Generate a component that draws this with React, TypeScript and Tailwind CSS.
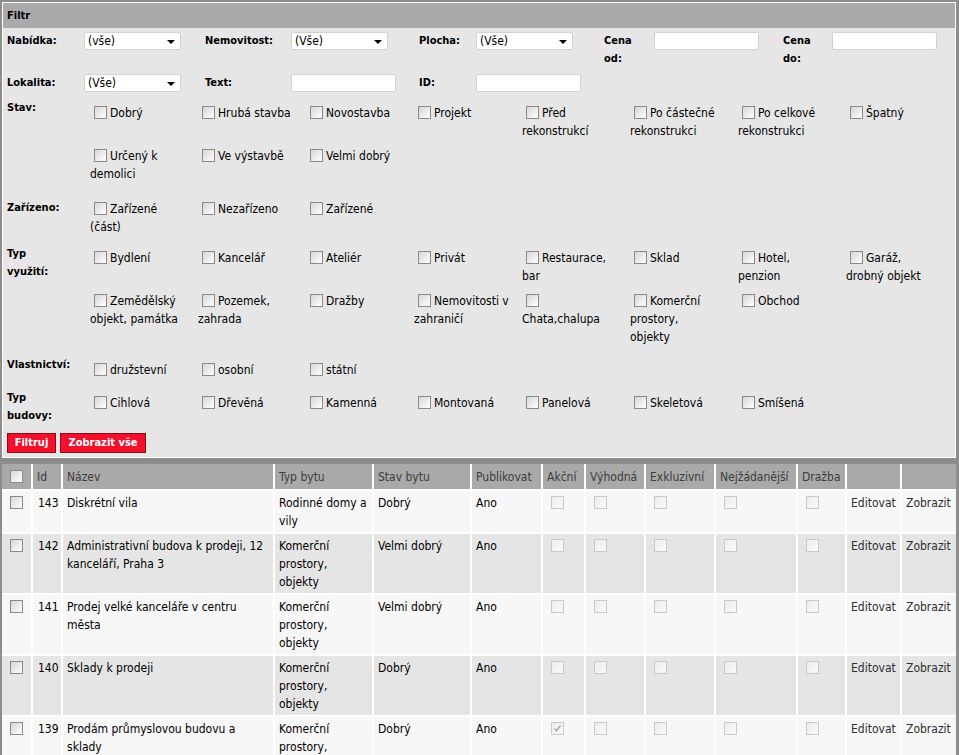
import type { ReactNode } from 'react'

// Filter panel + listing table of an old-school real-estate admin page
const FONT = "font-['DejaVu_Sans_Condensed','DejaVu_Sans',Verdana,sans-serif]"

type CheckItem = string[]

interface Section {
  label: string[]
  pt: string
  pb: string
  rows: CheckItem[][]
}

const SECTIONS: Section[] = [
  {
    label: ['Stav:'],
    pt: 'pt-[10px]',
    pb: 'pb-[11px]',
    rows: [
      [['Dobrý'], ['Hrubá stavba'], ['Novostavba'], ['Projekt'], ['Před', 'rekonstrukcí'], ['Po částečné', 'rekonstrukci'], ['Po celkové', 'rekonstrukci'], ['Špatný']],
      [['Určený k', 'demolici'], ['Ve výstavbě'], ['Velmi dobrý']],
    ],
  },
  {
    label: ['Zařízeno:'],
    pt: 'pt-[6px]',
    pb: 'pb-[4px]',
    rows: [[['Zařízené', '(část)'], ['Nezařízeno'], ['Zařízené']]],
  },
  {
    label: ['Typ', 'využití:'],
    pt: 'pt-[9px]',
    pb: 'pb-[5px]',
    rows: [
      [['Bydlení'], ['Kancelář'], ['Ateliér'], ['Privát'], ['Restaurace,', 'bar'], ['Sklad'], ['Hotel,', 'penzion'], ['Garáž,', 'drobný objekt']],
      [['Zemědělský', 'objekt, památka'], ['Pozemek,', 'zahrada'], ['Dražby'], ['Nemovitosti v', 'zahraničí'], ['', 'Chata,chalupa'], ['Komerční', 'prostory,', 'objekty'], ['Obchod']],
    ],
  },
  {
    label: ['Vlastnictví:'],
    pt: 'pt-[10px]',
    pb: 'pb-[5px]',
    rows: [[['družstevní'], ['osobní'], ['státní']]],
  },
  {
    label: ['Typ', 'budovy:'],
    pt: 'pt-[10px]',
    pb: 'pb-[5px]',
    rows: [[['Cihlová'], ['Dřevěná'], ['Kamenná'], ['Montovaná'], ['Panelová'], ['Skeletová'], ['Smíšená']]],
  },
]

interface Listing {
  id: number
  name: string[]
  type: string[]
  state: string
  akcni: boolean
}

const COMMERCIAL = ['Komerční', 'prostory,', 'objekty']

const LISTINGS: Listing[] = [
  { id: 143, name: ['Diskrétní vila'], type: ['Rodinné domy a', 'vily'], state: 'Dobrý', akcni: false },
  { id: 142, name: ['Administrativní budova k prodeji, 12', 'kanceláří, Praha 3'], type: COMMERCIAL, state: 'Velmi dobrý', akcni: false },
  { id: 141, name: ['Prodej velké kanceláře v centru', 'města'], type: COMMERCIAL, state: 'Velmi dobrý', akcni: false },
  { id: 140, name: ['Sklady k prodeji'], type: COMMERCIAL, state: 'Dobrý', akcni: false },
  { id: 139, name: ['Prodám průmyslovou budovu a', 'sklady'], type: COMMERCIAL, state: 'Dobrý', akcni: true },
]

const HEADERS = ['Id', 'Název', 'Typ bytu', 'Stav bytu', 'Publikovat', 'Akční', 'Výhodná', 'Exkluzivní', 'Nejžádanější', 'Dražba', '', '']
const COL_WIDTHS = ['w-[29px]', 'w-[30px]', 'w-[212px]', 'w-[99px]', 'w-[98px]', 'w-[71px]', 'w-[43px]', 'w-[60px]', 'w-[70px]', 'w-[82px]', 'w-[49px]', 'w-[55px]', 'w-[56px]']

function Box({ disabled = false, checked = false, className = '' }: { disabled?: boolean; checked?: boolean; className?: string }) {
  return (
    <span
      className={`relative inline-block h-[13px] w-[13px] align-[-2px] border ${
        disabled
          ? 'border-[#c9c9c9] bg-linear-to-br from-[#ececec] to-[#fafafa]'
          : 'border-[#8a8a8a] bg-linear-to-br from-[#d6d6d6] to-[#ffffff]'
      } ${className}`}
    >
      {checked && (
        <svg viewBox="0 0 11 11" className="absolute inset-0 h-[11px] w-[11px]">
          <path d="M2.5 5.5 L4.5 8 L8.5 2.5" fill="none" stroke="#a6a6a6" strokeWidth="1.3" />
        </svg>
      )}
    </span>
  )
}

function Lbl({ w, lines }: { w: string; lines: string[] }) {
  return (
    <div className={`${w} shrink-0 pl-[4px] text-[11px] font-bold`}>
      {lines.map((l) => (
        <div key={l}>{l}</div>
      ))}
    </div>
  )
}

function Field({ w, children }: { w: string; children: ReactNode }) {
  return <div className={`${w} shrink-0 pl-[4px]`}>{children}</div>
}

function Select({ value }: { value: string }) {
  return (
    <div className="flex h-[18px] w-[97px] items-center rounded-[2px] border border-[#d2d2d2] bg-white pl-[3px] leading-none">
      {value}
      <span className="ml-auto mr-[5px] mt-[2px] h-0 w-0 border-x-[4px] border-t-[4px] border-x-transparent border-t-black" />
    </div>
  )
}

function Input() {
  return <div className="h-[18px] w-[105px] rounded-[2px] border border-[#d2d2d2] bg-white" />
}

function CheckCell({ lines }: { lines: CheckItem }) {
  return (
    <div className="whitespace-nowrap">
      <div>
        <Box className="ml-[4px] mr-[3px]" />
        {lines[0]}
      </div>
      {lines.slice(1).map((l) => (
        <div key={l}>{l}</div>
      ))}
    </div>
  )
}

function FilterPanel() {
  return (
    <div className="border border-white bg-[#e6e6e6]">
      <div className="flex h-[25px] items-center bg-[#aaaaaa] pl-[4px] text-[11px] font-bold">Filtr</div>

      <div className="flex pb-[2px] pt-[4px]">
        <Lbl w="w-[77px]" lines={['Nabídka:']} />
        <Field w="w-[121px]"><Select value="(vše)" /></Field>
        <Lbl w="w-[86px]" lines={['Nemovitost:']} />
        <Field w="w-[128px]"><Select value="(Vše)" /></Field>
        <Lbl w="w-[57px]" lines={['Plocha:']} />
        <Field w="w-[128px]"><Select value="(Vše)" /></Field>
        <Lbl w="w-[50px]" lines={['Cena', 'od:']} />
        <Field w="w-[129px]"><Input /></Field>
        <Lbl w="w-[49px]" lines={['Cena', 'do:']} />
        <Field w="w-[128px]"><Input /></Field>
      </div>

      <div className="flex pb-[2px] pt-[4px]">
        <Lbl w="w-[77px]" lines={['Lokalita:']} />
        <Field w="w-[121px]"><Select value="(Vše)" /></Field>
        <Lbl w="w-[86px]" lines={['Text:']} />
        <Field w="w-[128px]"><Input /></Field>
        <Lbl w="w-[57px]" lines={['ID:']} />
        <Field w="w-[128px]"><Input /></Field>
      </div>

      {SECTIONS.map((s) => (
        <div key={s.label.join(' ')} className="flex">
          <div className="w-[77px] shrink-0 pb-[2px] pl-[4px] pt-[5px] text-[11px] font-bold">
            {s.label.map((l) => (
              <div key={l}>{l}</div>
            ))}
          </div>
          <div className={`ml-[10px] flex flex-col gap-y-[7px] ${s.pt} ${s.pb}`}>
            {s.rows.map((row, ri) => (
              <div key={ri} className="grid grid-cols-[repeat(8,108px)]">
                {row.map((item) => (
                  <CheckCell key={item.join(' ')} lines={item} />
                ))}
              </div>
            ))}
          </div>
        </div>
      ))}

      <div className="flex gap-[4px] pb-[4px] pl-[4px] pt-[6px] text-[11px]">
        <button type="button" className="h-[20px] w-[49px] border border-[#8e0a14] bg-[#f2102c] text-center font-bold leading-[18px] text-white">
          Filtruj
        </button>
        <button type="button" className="h-[20px] w-[86px] border border-[#8e0a14] bg-[#f2102c] text-center font-bold leading-[18px] text-white">
          Zobrazit vše
        </button>
      </div>
    </div>
  )
}

function ListingTable() {
  return (
    <table className="mt-[6px] w-full table-fixed border-separate border-spacing-0">
      <colgroup>
        {COL_WIDTHS.map((w, i) => (
          <col key={i} className={w} />
        ))}
      </colgroup>
      <thead>
        <tr className="bg-[#a9a9a9] text-[#3d3d3d]">
          <th className="pb-[3px] pt-[4px] text-center font-normal">
            <Box />
          </th>
          {HEADERS.map((h, i) => (
            <th key={i} className="whitespace-nowrap border-l-2 border-white pb-[3px] pl-[4px] pt-[4px] text-left font-normal">
              {h}
            </th>
          ))}
        </tr>
      </thead>
      <tbody>
        {LISTINGS.map((row, ri) => (
          <tr key={row.id} className={ri % 2 === 0 ? 'bg-[#f7f7f7]' : 'bg-[#e5e5e5]'}>
            <td className="border-t-2 border-white pb-[2px] pt-[3px] text-center align-top">
              <Box />
            </td>
            <td className="border-l-2 border-t-2 border-white pb-[2px] pl-[5px] pt-[3px] align-top">{row.id}</td>
            <td className="whitespace-nowrap border-l-2 border-t-2 border-white pb-[2px] pl-[4px] pt-[3px] align-top">
              {row.name.map((l) => (
                <div key={l}>{l}</div>
              ))}
            </td>
            <td className="whitespace-nowrap border-l-2 border-t-2 border-white pb-[2px] pl-[4px] pt-[3px] align-top">
              {row.type.map((l) => (
                <div key={l}>{l}</div>
              ))}
            </td>
            <td className="whitespace-nowrap border-l-2 border-t-2 border-white pb-[2px] pl-[4px] pt-[3px] align-top">{row.state}</td>
            <td className="border-l-2 border-t-2 border-white pb-[2px] pl-[4px] pt-[3px] align-top">Ano</td>
            {[row.akcni, false, false, false, false].map((checked, ci) => (
              <td key={ci} className="border-l-2 border-t-2 border-white pb-[2px] pl-[4px] pt-[3px] align-top">
                <Box disabled checked={checked} className="ml-[4px]" />
              </td>
            ))}
            <td className="border-l-2 border-t-2 border-white pb-[2px] pl-[4px] pt-[3px] align-top text-[#2e2e2e]">Editovat</td>
            <td className="border-l-2 border-t-2 border-white pb-[2px] pl-[4px] pt-[3px] align-top text-[#2e2e2e]">Zobrazit</td>
          </tr>
        ))}
      </tbody>
    </table>
  )
}

export default function App() {
  return (
    <div className={`${FONT} bg-[#8d8d8d] pl-[2px] pr-[3px] pt-[2px] text-[12px] leading-[18px] text-black`}>
      <FilterPanel />
      <ListingTable />
    </div>
  )
}
